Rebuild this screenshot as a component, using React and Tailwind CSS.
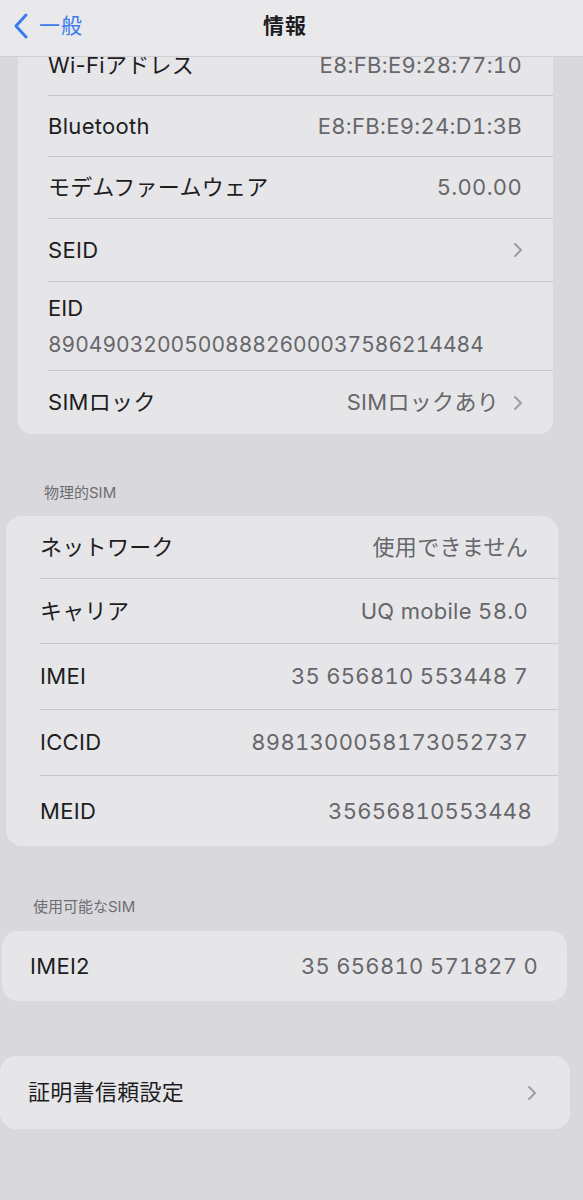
import React from 'react';

const FONT = "font-['Inter','Noto_Sans_CJK_JP',sans-serif]";

const Chevron = ({ className = '' }) => (
  <svg width="10" height="16" viewBox="0 0 10 16" className={className} fill="none">
    <path d="M2 2 L8 8 L2 14" stroke="#9d9da2" strokeWidth="2" strokeLinecap="round" strokeLinejoin="round" />
  </svg>
);

const Row = ({ label, value, chevron, h = 'h-[61px]', inset = 'ml-[30px]', pr = 'pr-[31px]', last }) => (
  <div className={`${inset} ${h} ${pr} flex items-center justify-between ${last ? '' : 'border-b border-[#c8c8cc]'}`}>
    <span className="text-[22px] text-[#1d1d1f] tracking-[0.3px]">{label}</span>
    <div className="flex items-center gap-[14px]">
      {value && <span className="text-[22px] text-[#66666b] tabular-nums tracking-[0.3px]">{value}</span>}
      {chevron && <Chevron />}
    </div>
  </div>
);

export default function App() {
  return (
    <div className={`${FONT} min-h-[1200px] w-[583px] bg-[#d9d9dd] overflow-hidden`}>
      {/* Nav bar */}
      <header className="sticky top-0 z-10 h-[57px] bg-[#e9e9eb] border-b border-[#cfcfd3] flex items-center relative">
        <div className="flex items-center pl-[13px] gap-[10px] mt-[-5px]">
          <svg width="16" height="26" viewBox="0 0 16 26" fill="none">
            <path d="M13 2 L3 13 L13 24" stroke="#3a7bf0" strokeWidth="3" strokeLinecap="round" strokeLinejoin="round" />
          </svg>
          <span className="text-[21px] text-[#3a7bf0] tracking-[1px]">一般</span>
        </div>
        <span className="absolute left-[263px] top-[10px] text-[21px] font-bold text-[#1d1d1f] tracking-[1px]">情報</span>
      </header>

      <main className="-mt-[22px]">
        {/* Card 1 */}
        <div className="ml-[18px] mr-[30px] rounded-[14px] bg-[#e6e6e9]">
          <Row label="Wi-Fiアドレス" value="E8:FB:E9:28:77:10" h="h-[61px]" />
          <Row label="Bluetooth" value="E8:FB:E9:24:D1:3B" h="h-[61px]" />
          <Row label="モデムファームウェア" value="5.00.00" h="h-[62px]" />
          <Row label="SEID" chevron h="h-[63px]" pr="pr-[30px]" />
          <div className="ml-[30px] h-[89px] pr-[31px] border-b border-[#c8c8cc] flex flex-col justify-center gap-[4px]">
            <span className="text-[22px] text-[#1d1d1f]">EID</span>
            <span className="text-[21px] text-[#66666b] tabular-nums">89049032005008882600037586214484</span>
          </div>
          <Row label="SIMロック" value="SIMロックあり" chevron h="h-[63px]" pr="pr-[30px]" last />
        </div>

        {/* Physical SIM */}
        <div className="pl-[44px] pt-[48px] pb-[12px] text-[15px] text-[#6d6d72] leading-[22px]">物理的SIM</div>
        <div className="ml-[6px] mr-[25px] rounded-[16px] bg-[#e6e6e9]">
          <Row label="ネットワーク" value="使用できません" h="h-[63px]" inset="ml-[34px]" pr="pr-[30px]" />
          <Row label="キャリア" value="UQ mobile 58.0" h="h-[65px]" inset="ml-[34px]" pr="pr-[30px]" />
          <Row label="IMEI" value="35 656810 553448 7" h="h-[66px]" inset="ml-[34px]" pr="pr-[30px]" />
          <Row label="ICCID" value="8981300058173052737" h="h-[66px]" inset="ml-[34px]" pr="pr-[30px]" />
          <Row label="MEID" value="35656810553448" h="h-[70px]" inset="ml-[34px]" pr="pr-[26px]" last />
        </div>

        {/* Available SIM */}
        <div className="pl-[33px] pt-[50px] pb-[13px] text-[15px] text-[#6d6d72] leading-[22px]">使用可能なSIM</div>
        <div className="ml-[2px] mr-[16px] rounded-[16px] bg-[#e6e6e9]">
          <Row label="IMEI2" value="35 656810 571827 0" h="h-[70px]" inset="ml-[28px]" pr="pr-[29px]" last />
        </div>

        {/* Certificate */}
        <div className="mt-[55px] mr-[13px] rounded-[16px] bg-[#e6e6e9]">
          <Row label="証明書信頼設定" chevron h="h-[73px]" inset="ml-[28px]" pr="pr-[33px]" last />
        </div>
      </main>
    </div>
  );
}
